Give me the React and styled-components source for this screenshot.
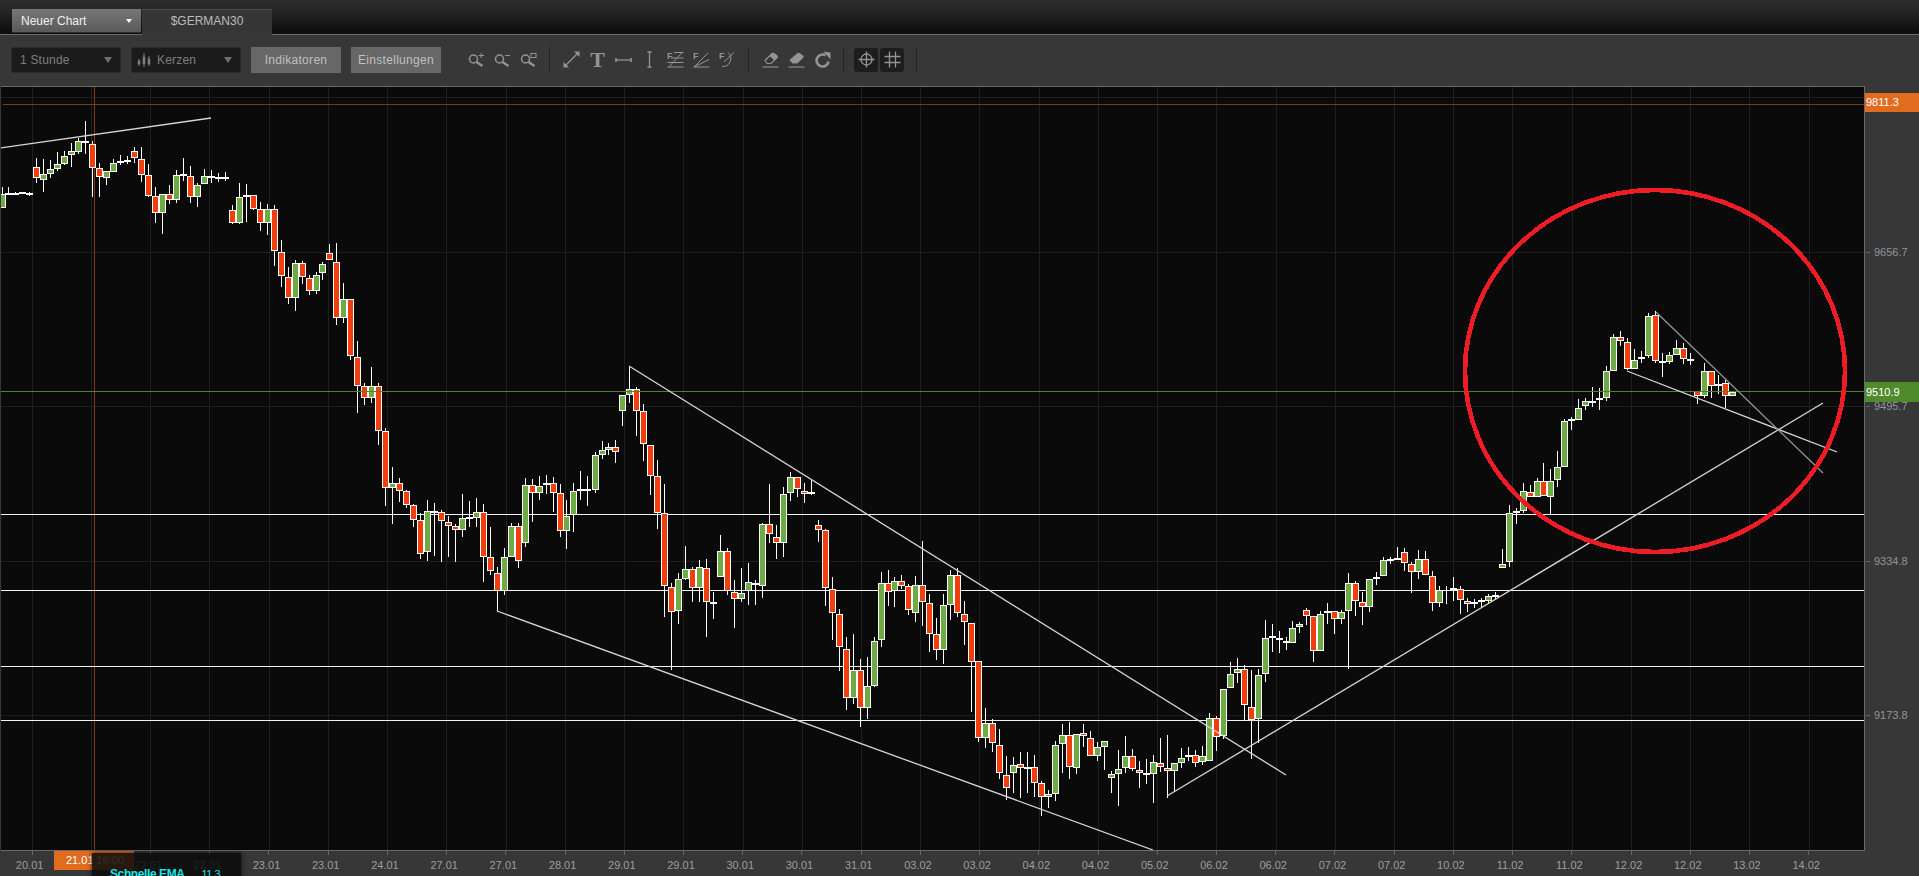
import React from 'react';
import styled, { createGlobalStyle } from 'styled-components';

const GlobalStyle = createGlobalStyle`
  html, body {
    margin: 0;
    padding: 0;
    height: 100%;
    overflow: hidden;
    background: #373737;
    font-family: "Liberation Sans", Arial, sans-serif;
  }
`;

// candle rows: [x, high, top, bottom, low, kind], measured on 3x crops
// each block has its own origin, kind r = down, g = up, d = doji
const CANDLE_BLOCKS = [
  { ox: 0, oy: 100, rows: [
    [7,262,283,323,323,'g'],[25,262,281,281,284,'d'],[46,275,282,282,285,'d'],[67,277,279,279,281,'d'],[88,277,282,282,287,'d'],
    [109,175,202,235,250,'r'],[130,178,223,239,275,'g'],[151,180,208,221,233,'g'],[172,157,193,206,213,'g'],[193,152,169,191,196,'g'],
    [214,128,154,164,200,'g'],[235,115,124,155,163,'g'],[256,64,124,130,162,'r'],[277,122,133,205,292,'r'],[298,190,205,230,292,'r'],
    [319,214,214,233,256,'g'],[340,176,190,215,215,'g'],[361,165,182,187,195,'g'],[382,168,182,182,192,'d'],[403,141,154,173,188,'r'],
    [424,142,178,224,245,'r'],[445,193,226,287,290,'r'],[466,262,289,340,370,'r'],[487,283,283,340,403,'g'],[508,255,283,301,311,'r'],
    [529,210,226,301,310,'g'],[550,175,226,226,242,'d'],[571,198,229,290,310,'r'],[592,250,256,292,320,'g'],[613,208,229,251,251,'g'],
    [634,210,231,231,250,'d'],[655,220,233,233,245,'d'],[676,216,232,238,242,'r'],
    [697,316,331,370,373,'r'],[717,250,292,370,373,'g'],[738,253,287,287,367,'d'],[759,286,286,326,330,'r'],[780,306,328,370,392,'r'],
    [801,312,328,370,406,'g'],[822,316,328,454,497,'r'],[843,420,455,527,560,'r'],[864,502,532,595,611,'r'],[885,480,490,595,634,'g'],
    [906,483,490,532,553,'r'],[927,526,535,574,584,'r'],[948,515,526,574,581,'g'],[967,486,493,520,539,'g'],[988,433,458,479,479,'r'],
    [1009,430,485,655,674,'r'],[1030,550,596,655,670,'g'],[1051,598,598,769,779,'r'],
  ] },
  { ox: 240, oy: 330, rows: [
    [352,34,82,167,248,'r'],[373,160,169,203,224,'r'],[394,112,169,203,218,'g'],[415,160,169,302,345,'r'],[436,295,304,475,527,'r'],
    [457,412,458,475,581,'g'],[478,445,458,482,517,'r'],[499,480,484,524,533,'r'],[520,522,526,569,590,'r'],[541,550,571,671,686,'r'],
    [562,511,544,665,692,'g'],[583,520,545,545,677,'d'],[604,540,547,572,695,'r'],[625,558,577,587,680,'r'],[646,583,589,601,695,'r'],
    [667,492,565,599,620,'g'],[688,513,563,563,590,'d'],[709,505,547,563,590,'g'],
  ] },
  { ox: 370, oy: 350, rows: [
    [340,463,485,620,697,'r'],[361,532,622,662,675,'r'],[382,652,668,724,783,'r'],[403,595,622,724,735,'g'],[424,520,529,620,620,'g'],
    [445,520,529,632,653,'r'],[466,385,404,578,590,'g'],[487,388,404,428,517,'r'],[508,379,409,428,449,'g'],[529,375,401,401,433,'d'],
    [550,382,400,428,485,'r'],[571,403,430,542,560,'r'],[590,451,499,542,598,'g'],[611,400,424,496,545,'g'],[631,364,419,419,451,'d'],
    [652,378,419,419,467,'d'],[675,306,316,421,428,'g'],[696,274,301,314,327,'g'],[715,280,292,299,314,'g'],[737,270,292,305,338,'r'],
    [758,136,136,182,227,'g'],[779,50,118,134,158,'g'],[800,110,118,182,257,'r'],[820,163,184,281,332,'r'],[841,284,284,377,434,'r'],
    [862,331,379,488,538,'r'],[883,403,490,707,800,'r'],[904,700,712,785,960,'r'],[925,670,688,782,821,'g'],[946,589,658,686,690,'g'],
    [967,650,658,713,755,'r'],[988,631,652,713,755,'g'],[1009,628,655,755,860,'r'],[1030,725,760,760,806,'d'],[1051,556,604,680,680,'g'],
    [1072,595,604,724,735,'r'],[1093,690,727,746,833,'r'],[1114,655,730,748,755,'g'],[1135,640,695,724,765,'g'],[1156,690,698,706,765,'r'],
  ] },
  { ox: 760, oy: 460, rows: [
    [7,190,193,377,415,'g'],[28,73,193,221,250,'r'],[49,196,230,250,296,'r'],[70,82,103,250,290,'g'],[91,35,52,100,122,'g'],
    [112,52,52,88,110,'r'],[133,70,92,103,130,'r'],[154,60,97,103,106,'g'],
    [175,181,196,211,245,'r'],[196,208,211,383,437,'r'],[217,352,386,458,539,'r'],[238,448,463,562,632,'r'],[259,532,566,715,749,'r'],
    [280,523,631,715,731,'g'],[301,598,631,743,800,'r'],[322,590,677,745,778,'g'],[343,532,544,677,680,'g'],[364,337,370,541,560,'g'],
    [385,331,370,397,437,'r'],[404,352,364,394,440,'g'],[425,346,364,377,388,'r'],[446,373,379,449,464,'r'],[467,349,376,458,487,'g'],
    [488,244,376,425,497,'r'],[509,403,428,521,575,'r'],[530,475,523,569,601,'r'],[551,403,436,569,613,'g'],[572,331,346,434,479,'g'],
    [593,325,346,458,472,'r'],[614,424,461,485,554,'r'],[634,490,490,605,755,'r'],
  ] },
  { ox: 960, oy: 640, rows: [
    [55,62,64,295,305,'r'],[76,205,250,295,323,'g'],[97,238,250,310,335,'r'],[118,268,316,400,416,'r'],[139,349,406,443,480,'r'],
    [160,352,376,400,458,'g'],[181,337,373,385,475,'r'],[202,337,383,383,460,'d'],[223,346,382,428,470,'r'],[244,424,430,472,527,'r'],
    [265,450,463,472,505,'g'],[286,304,316,463,482,'g'],[307,253,286,313,400,'g'],[328,247,286,382,416,'r'],[349,283,283,385,403,'g'],
    [370,253,280,289,320,'r'],[391,274,295,349,349,'r'],[412,307,322,349,362,'g'],[433,304,304,322,391,'g'],
    [454,394,403,415,460,'g'],[475,331,388,403,497,'g'],[496,289,349,385,400,'g'],[517,328,349,388,394,'r'],[538,364,391,400,443,'r'],
    [559,358,403,403,431,'d'],[580,346,367,403,490,'g'],[601,295,370,382,397,'r'],[622,286,385,394,475,'r'],[643,370,370,394,455,'g'],
    [664,325,355,370,385,'g'],[685,322,346,352,364,'g'],[706,331,346,370,382,'r'],[727,319,349,367,376,'g'],[748,220,235,364,364,'g'],
    [768,228,235,292,334,'r'],[789,148,148,289,296,'g'],[810,67,103,145,145,'g'],[831,55,88,100,130,'g'],[852,76,88,196,244,'r'],
    [873,91,202,241,358,'r'],[894,88,106,238,310,'g'],
  ] },
  { ox: 1150, oy: 520, rows: [
    [345,301,355,463,487,'g'],[366,313,352,352,395,'d'],[387,334,355,361,398,'r'],[408,352,365,365,391,'d'],[427,304,325,370,370,'g'],
    [448,307,313,322,340,'g'],
    [469,265,271,289,316,'r'],[490,289,289,394,427,'r'],[511,274,283,394,394,'g'],[532,250,274,280,313,'g'],[553,274,274,298,343,'r'],
    [574,271,277,298,313,'g'],[595,160,190,274,448,'g'],[616,184,190,244,289,'r'],[637,217,247,262,316,'r'],[658,178,178,262,277,'g'],
    [679,157,173,173,196,'d'],[700,112,121,169,169,'g'],[721,112,119,119,133,'d'],[742,82,116,116,118,'d'],[763,85,97,130,154,'r'],
    [784,127,133,157,220,'r'],[805,91,118,157,176,'g'],[826,94,118,166,166,'r'],[847,154,169,250,274,'r'],[868,199,211,250,262,'g'],
    [889,199,226,226,253,'w'],[910,170,208,208,244,'d'],[931,199,208,241,283,'r'],[952,235,244,253,277,'r'],[973,238,250,250,265,'d'],
    [994,235,244,244,262,'d'],[1015,223,229,244,250,'g'],[1036,217,228,228,240,'d'],
  ] },
  { ox: 1480, oy: 290, rows: [
    [67,778,823,835,835,'g'],[88,646,670,817,830,'g'],[109,655,664,670,703,'g'],[130,580,604,664,670,'g'],[151,586,607,622,622,'r'],
    [172,565,574,622,622,'g'],[190,520,574,619,619,'r'],[211,538,574,622,676,'g'],[232,484,532,571,592,'g'],[253,388,394,532,532,'g'],
    [274,382,391,391,421,'d'],[295,328,355,391,391,'g'],[316,325,334,349,361,'g'],[337,292,334,340,352,'r'],[358,295,328,328,361,'d'],
    [379,229,244,325,334,'g'],[400,133,142,244,244,'g'],[421,124,142,154,169,'r'],[442,145,157,238,240,'r'],[463,178,211,238,238,'g'],
    [484,184,205,205,220,'d'],[505,70,79,199,205,'g'],[526,64,76,214,220,'r'],[547,190,217,217,262,'d'],[568,187,196,217,223,'g'],
    [589,151,175,196,196,'g'],[610,160,175,208,223,'r'],[631,190,209,209,226,'d'],
    [652,304,304,319,343,'r'],[673,220,244,319,325,'g'],[694,244,244,289,325,'r'],[715,256,283,289,313,'g'],[736,271,280,319,355,'r'],
    [757,307,307,319,319,'g'],
  ] },
];

const CANDLES = CANDLE_BLOCKS.flatMap(({ ox, oy, rows }) =>
  rows.map(([zx, high, top, bottom, low, kind]) => ({
    x: Math.floor(ox + zx / 3),
    high: Math.round(oy + high / 3),
    top: Math.round(oy + top / 3),
    bottom: Math.round(oy + bottom / 3),
    low: Math.round(oy + low / 3),
    kind,
  }))
);

const GRID_X = [32,91,150,209,269,328,387,446,506,565,624,683,743,802,861,920,979,1039,1098,1157,1216,1276,1335,1394,1453,1512,1572,1631,1690,1749,1809];
const GRID_Y = [97, 252, 406, 561, 715];
const LEVELS = [514, 590, 666, 720];
const TREND_LINES = [
  { x1: 0, y1: 148, x2: 211, y2: 118, color: '#d6d6d6' },
  { x1: 629, y1: 366, x2: 1286, y2: 775, color: '#d6d6d6' },
  { x1: 497, y1: 611, x2: 1153, y2: 850, color: '#d6d6d6' },
  { x1: 1167, y1: 796, x2: 1823, y2: 403, color: '#d6d6d6' },
  { x1: 1627, y1: 371, x2: 1837, y2: 452, color: '#d6d6d6' },
  { x1: 1656, y1: 312, x2: 1823, y2: 473, color: '#969696' },
];
const DATES = ['20.01','21.01','22.01','22.01','23.01','23.01','24.01','27.01','27.01','28.01','29.01','29.01','30.01','30.01','31.01','03.02','03.02','04.02','04.02','05.02','06.02','06.02','07.02','07.02','10.02','11.02','11.02','12.02','12.02','13.02','14.02'];
const PRICES = [
  { y: 97, label: '9815.0' },
  { y: 252, label: '9656.7' },
  { y: 406, label: '9495.7' },
  { y: 561, label: '9334.8' },
  { y: 715, label: '9173.8' },
];

const Page = styled.div`
  position: relative;
  width: 1919px;
  height: 876px;
  overflow: hidden;
  background: #373737;
  display: flex;
  flex-direction: column;
`;

const TabBar = styled.div`
  height: 35px;
  box-sizing: border-box;
  padding: 9px 0 0 12px;
  display: flex;
  gap: 1px;
  background: linear-gradient(#2c2c2c, #262626 30%, #0e0e0e 92%);
  border-bottom: 1px solid #6a6a6a;
`;

const ChartMenu = styled.div`
  width: 129px;
  height: 24px;
  box-sizing: border-box;
  padding: 0 9px;
  display: flex;
  align-items: center;
  justify-content: space-between;
  font-size: 12px;
  color: #f0f0f0;
  background: linear-gradient(#777, #5a5a5a);
  border-bottom: 1px solid #2e2e2e;
`;

const MenuCaret = styled.span`
  border-left: 3px solid transparent;
  border-right: 3px solid transparent;
  border-top: 4px solid ${(p) => p.$color};
  ${(p) => p.$wide && 'border-left-width: 4px; border-right-width: 4px; border-top-width: 6px;'}
`;

const SymbolTab = styled.div`
  width: 130px;
  height: 26px;
  box-sizing: border-box;
  display: flex;
  align-items: center;
  justify-content: center;
  font-size: 12px;
  color: #bcbcbc;
  background: #363636;
  border-top: 1px solid #4d4d4d;
  padding-bottom: 3px;
`;

const Toolbar = styled.div`
  height: 51px;
  box-sizing: border-box;
  padding: 0 0 2px 11px;
  display: flex;
  align-items: center;
  background: #373737;
`;

const Select = styled.div`
  width: 110px;
  height: 26px;
  box-sizing: border-box;
  margin-right: 10px;
  padding: 0 8px 0 ${(p) => p.$inset ?? 8}px;
  display: flex;
  align-items: center;
  gap: 6px;
  font-size: 12px;
  letter-spacing: 0.2px;
  color: #7e7e7e;
  background: #1b1b1b;
  border: 1px solid #2b2b2b;
`;

const SelectText = styled.span`
  flex: 1;
`;

const ActionButton = styled.div`
  width: 90px;
  height: 26px;
  box-sizing: border-box;
  margin-right: 10px;
  display: flex;
  align-items: center;
  justify-content: center;
  font-size: 12px;
  letter-spacing: 0.3px;
  color: #c0c0c0;
  background: #666766;
`;

const ToolGroup = styled.div`
  display: flex;
  align-items: center;
  gap: ${(p) => p.$gap ?? 9}px;
  margin-left: ${(p) => p.$offset ?? 0}px;
`;

const Divider = styled.span`
  width: 1px;
  height: 25px;
  margin: 0 13px 0 12px;
  background: #222;
`;

const ToggleButton = styled.div`
  width: 24px;
  height: 24px;
  display: flex;
  align-items: center;
  justify-content: center;
  background: #1d1d1d;
  border-radius: 3px;
`;

const TextToolGlyph = styled.span`
  width: 17px;
  height: 17px;
  display: flex;
  align-items: center;
  justify-content: center;
  font-family: "Liberation Serif", serif;
  font-size: 22px;
  font-weight: 700;
  line-height: 17px;
  color: #949494;
`;

const ChartRow = styled.div`
  flex: 1;
  min-height: 0;
  display: flex;
  padding-left: 1px;
`;

const Plot = styled.div`
  width: 1864px;
  height: 765px;
  box-sizing: border-box;
  border-top: 1px solid #6a6a6a;
  border-right: 1px solid #6a6a6a;
  border-bottom: 1px solid #6a6a6a;
  background: #0a0a0a;
  svg {
    display: block;
  }
`;

const PriceAxis = styled.div`
  position: relative;
  flex: 1;
`;

const PriceTick = styled.div`
  position: absolute;
  left: 0;
  top: ${(p) => p.$y - 86 - 8}px;
  height: 16px;
  padding-left: 9px;
  line-height: 16px;
  font-size: 11px;
  color: #8f969b;
  &::before {
    content: '';
    position: absolute;
    left: 1px;
    top: 8px;
    width: 4px;
    height: 1px;
    background: #666;
  }
`;

const PriceBadge = styled.div`
  position: absolute;
  left: 0;
  right: 0;
  top: ${(p) => p.$y - 86}px;
  height: ${(p) => p.$h}px;
  padding-left: 1px;
  line-height: ${(p) => p.$h}px;
  font-size: 11px;
  color: #fff;
  background: ${(p) => p.$color};
`;

const DateAxis = styled.div`
  height: 25px;
  padding-left: 2px;
  display: flex;
  flex-shrink: 0;
`;

const DateCell = styled.div`
  position: relative;
  flex: 0 0 59.23px;
  box-sizing: border-box;
  padding: 7px 4px 0 0;
  text-align: center;
  font-size: 11px;
  line-height: 14px;
  color: #9a9fa3;
  &::before {
    content: '';
    position: absolute;
    left: 50%;
    top: 0;
    width: 1px;
    height: 4px;
    background: #666;
  }
`;

const CrosshairDate = styled.div`
  position: absolute;
  left: 54px;
  top: 851px;
  width: 80px;
  height: 19px;
  box-sizing: border-box;
  padding-left: 12px;
  line-height: 18px;
  font-size: 11px;
  color: #fff;
  background: #e16c20;
`;

const LegendPanel = styled.div`
  position: absolute;
  left: 92px;
  top: 853px;
  width: 149px;
  height: 30px;
  box-sizing: border-box;
  padding: 14px 0 0 18px;
  display: flex;
  gap: 17px;
  font-size: 12px;
  line-height: 14px;
  color: #18e6e6;
  background: rgba(10, 10, 10, 0.86);
  box-shadow: 0 0 5px rgba(0, 0, 0, 0.75);
`;

const LegendName = styled.span`
  font-weight: 700;
  letter-spacing: -0.4px;
`;

const LegendValue = styled.span`
  font-size: 11px;
  letter-spacing: -0.5px;
`;

const ICON = '#949494';

const Icon = ({ w = 17, h = 17, children }) => (
  <svg width={w} height={h} viewBox={`0 0 ${w} ${h}`} fill="none" stroke={ICON} strokeWidth="1.3">
    {children}
  </svg>
);

const Lens = () => (
  <>
    <circle cx="5.5" cy="8" r="4" strokeWidth="1.5" />
    <line x1="8.5" y1="11" x2="14.5" y2="15" strokeWidth="2.2" />
  </>
);

const ZoomIn = () => (
  <Icon>
    <Lens />
    <path d="M10.5 4.5H16M13.2 2V7" strokeWidth="1" />
  </Icon>
);

const ZoomOut = () => (
  <Icon>
    <Lens />
    <path d="M11 4.5H16" strokeWidth="1" />
  </Icon>
);

const ZoomBox = () => (
  <Icon>
    <Lens />
    <rect x="11" y="2.5" width="5" height="4" strokeWidth="1" />
  </Icon>
);

const DiagonalArrow = () => (
  <Icon>
    <line x1="3" y1="14" x2="14" y2="3" />
    <path d="M0.5 11V16.5H6Z M16.5 6V0.5H11Z" fill={ICON} stroke="none" />
  </Icon>
);

const HorizontalBar = () => (
  <Icon>
    <path d="M0.5 9H16.5" />
    <path d="M1 7V11M16 7V11" strokeWidth="1.6" />
  </Icon>
);

const VerticalBar = () => (
  <Icon>
    <path d="M8.5 1V16" />
    <path d="M6.5 1H10.5M6.5 16H10.5" strokeWidth="1.6" />
  </Icon>
);

// the F sits in the top left corner of each fibonacci icon
const FibLetter = () => (
  <text x="0" y="8" fontFamily='"Liberation Sans", sans-serif' fontWeight="700" fontSize="9" fill={ICON} stroke="none">F</text>
);

const FibLines = () => (
  <Icon>
    <FibLetter />
    <path d="M7 1.5H16.5M4 7H16.5M0.5 11.5H16.5M0.5 16H16.5" strokeWidth="1" />
    <path d="M2 16L15 1.5" strokeWidth="1" />
  </Icon>
);

const FibFan = () => (
  <Icon>
    <FibLetter />
    <path d="M1 16L15 2M1 16L16 8.5M0.5 16H16.5" strokeWidth="1" />
  </Icon>
);

const FibArc = () => (
  <Icon>
    <FibLetter />
    <path d="M9 1.5A8 8 0 0 1 3 15.5" strokeWidth="1" />
    <path d="M5 11L15 1.5" strokeWidth="1" />
  </Icon>
);

const EraserLine = () => (
  <Icon>
    <path d="M3 9.5L10 2.5Q11 1.8 12 2.5L15 4.8Q15.8 5.8 15 6.8L9 12.5H5Z" strokeWidth="1.1" />
    <path d="M7.5 5L12.5 9.5L15.3 6.6Q15.8 5.8 15 4.8L12 2.5Q11 1.8 10 2.5Z" fill={ICON} stroke="none" />
    <path d="M0.5 16H16.5" strokeWidth="1.1" />
  </Icon>
);

const EraserSolid = () => (
  <Icon>
    <path d="M1.5 9L9.5 2Q10.8 1.2 12 2.2L15.3 4.7Q16.2 5.8 15.2 7L9.3 12.5H4.5Z" fill={ICON} stroke="none" />
    <path d="M0.5 16H16.5" strokeWidth="1.1" />
  </Icon>
);

const Refresh = () => (
  <Icon>
    <path d="M14.5 10.5A6 6 0 1 1 11.5 4.3" strokeWidth="2.6" />
    <path d="M9.5 0.5L16.5 1.5V8.5Z" fill={ICON} stroke="none" />
  </Icon>
);

const Crosshair = () => (
  <Icon>
    <circle cx="8.5" cy="8.5" r="5.5" />
    <path d="M8.5 0.5V16.5M0.5 8.5H16.5" />
  </Icon>
);

const GridLines = () => (
  <Icon>
    <path d="M5.5 0.5V16.5M11.5 0.5V16.5M0.5 5.5H16.5M0.5 11.5H16.5" />
  </Icon>
);

const CandlesIcon = () => (
  <svg width="14" height="16" viewBox="0 0 14 16" fill="#7e7e7e" stroke="#7e7e7e">
    <path d="M2 7V14M7 1V15M12 4V14" strokeWidth="1" />
    <rect x="1" y="9" width="2" height="3" strokeWidth="0.6" />
    <rect x="6" y="5" width="2" height="7" strokeWidth="0.6" />
    <rect x="11" y="7" width="2" height="5" strokeWidth="0.6" />
  </svg>
);

const Candle = ({ candle }) => {
  const { x, high, top, bottom, low, kind } = candle;
  return (
    <g>
      <line x1={x + 0.5} y1={high} x2={x + 0.5} y2={low} stroke="#fff" />
      {kind === 'd' && <rect x={x - 3} y={top - 1} width="7" height="2" fill="#fff" />}
      {(kind === 'r' || kind === 'g') && (
        <rect
          x={x - 2.5}
          y={top + 0.5}
          width="6"
          height={Math.max(bottom - top - 1, 1)}
          fill={kind === 'r' ? '#f03e0e' : '#6fab45'}
          stroke="#fff"
        />
      )}
    </g>
  );
};

const ChartCanvas = () => (
  <svg width="1863" height="763" viewBox="1 87 1863 763">
    <g shapeRendering="crispEdges">
      {GRID_X.map((x) => (
        <line key={x} x1={x + 0.5} y1="87" x2={x + 0.5} y2="850" stroke="#1f1f1f" />
      ))}
      {GRID_Y.map((y) => (
        <line key={y} x1="0" y1={y + 0.5} x2="1865" y2={y + 0.5} stroke="#1f1f1f" />
      ))}
      <line x1="3" y1="104.5" x2="1865" y2="104.5" stroke="#7c3a16" />
      <line x1="94.5" y1="87" x2="94.5" y2="850" stroke="#7c3a16" />
      {LEVELS.map((y) => (
        <line key={y} x1="0" y1={y + 0.5} x2="1865" y2={y + 0.5} stroke="#f2f2f2" />
      ))}
    </g>
    <g shapeRendering="crispEdges">
      {CANDLES.map((c) => (
        <Candle key={c.x} candle={c} />
      ))}
      <line x1="0" y1="391.5" x2="1865" y2="391.5" stroke="#4f7f2f" />
    </g>
    {TREND_LINES.map((l) => (
      <line key={l.x1} x1={l.x1} y1={l.y1} x2={l.x2} y2={l.y2} stroke={l.color} strokeWidth="1.3" />
    ))}
    <ellipse cx="1655" cy="371" rx="190" ry="181" fill="none" stroke="#ee1c25" strokeWidth="4.6" shapeRendering="crispEdges" />
  </svg>
);

const App = () => (
  <Page>
    <GlobalStyle />
    <TabBar>
      <ChartMenu>
        Neuer Chart
        <MenuCaret $color="#fff" />
      </ChartMenu>
      <SymbolTab>$GERMAN30</SymbolTab>
    </TabBar>
    <Toolbar>
      <Select>
        <SelectText>1 Stunde</SelectText>
        <MenuCaret $color="#6e6e6e" $wide />
      </Select>
      <Select $inset={5}>
        <CandlesIcon />
        <SelectText>Kerzen</SelectText>
        <MenuCaret $color="#6e6e6e" $wide />
      </Select>
      <ActionButton>Indikatoren</ActionButton>
      <ActionButton>Einstellungen</ActionButton>
      <ToolGroup $offset={17}>
        <ZoomIn />
        <ZoomOut />
        <ZoomBox />
      </ToolGroup>
      <Divider />
      <ToolGroup>
        <DiagonalArrow />
        <TextToolGlyph>T</TextToolGlyph>
        <HorizontalBar />
        <VerticalBar />
        <FibLines />
        <FibFan />
        <FibArc />
      </ToolGroup>
      <Divider />
      <ToolGroup>
        <EraserLine />
        <EraserSolid />
        <Refresh />
      </ToolGroup>
      <Divider />
      <ToolGroup $gap={2} $offset={-3}>
        <ToggleButton><Crosshair /></ToggleButton>
        <ToggleButton><GridLines /></ToggleButton>
      </ToolGroup>
      <Divider />
    </Toolbar>
    <ChartRow>
      <Plot>
        <ChartCanvas />
      </Plot>
      <PriceAxis>
        {PRICES.map((p) => (
          <PriceTick key={p.label} $y={p.y}>{p.label}</PriceTick>
        ))}
        <PriceBadge $y={93} $h={19} $color="#e16c20">9811.3</PriceBadge>
        <PriceBadge $y={382} $h={20} $color="#4f8a2b">9510.9</PriceBadge>
      </PriceAxis>
    </ChartRow>
    <DateAxis>
      {DATES.map((d, i) => (
        <DateCell key={i}>{d}</DateCell>
      ))}
    </DateAxis>
    <CrosshairDate>21.01 16:00</CrosshairDate>
    <LegendPanel>
      <LegendName>Schnelle EMA</LegendName>
      <LegendValue>11.3</LegendValue>
    </LegendPanel>
  </Page>
);

export default App;
